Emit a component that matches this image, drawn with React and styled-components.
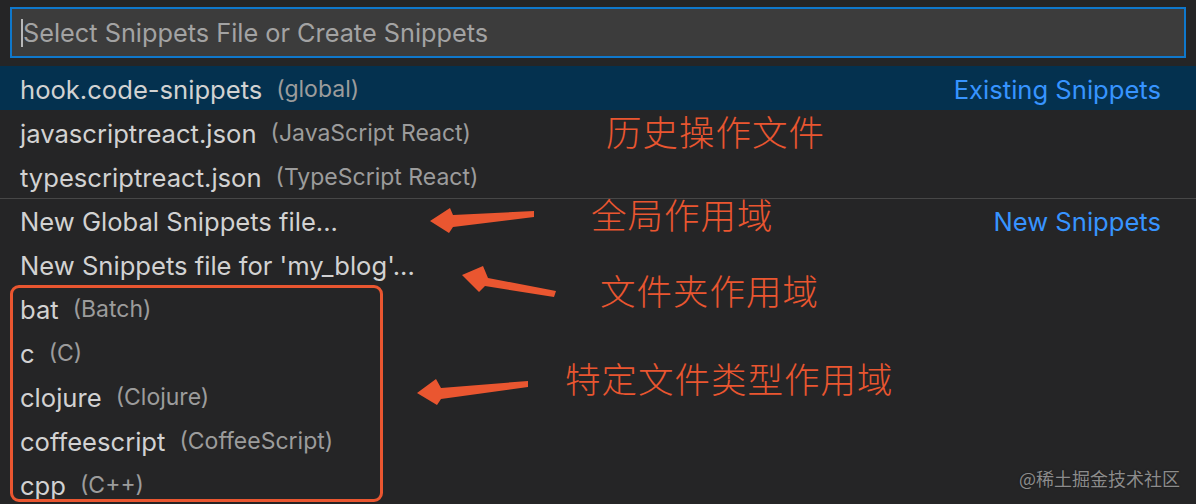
import React from 'react'
import styled, { createGlobalStyle } from 'styled-components'

const GlobalStyle = createGlobalStyle`
  body {
    margin: 0;
    background: #252526;
  }
`;

const Page = styled.div`
  position: relative;
  width: 1196px;
  height: 504px;
  overflow: hidden;
  background: #252526;
  font-family: Inter, "Noto Sans", sans-serif;
`;

const InputWrap = styled.div`
  padding: 7px 10px 8px 10px;
`;

const InputBox = styled.div`
  height: 51px;
  box-sizing: border-box;
  border: 2px solid #0f78cc;
  background: #3c3c3c;
  display: flex;
  align-items: center;
  padding-left: 9px;
`;

const Caret = styled.span`
  width: 2px;
  height: 28px;
  background: #b8b8b8;
`;

const Placeholder = styled.span`
  color: #a3a3a3;
  font-size: 25.3px;
`;

const List = styled.div`
  display: flex;
  flex-direction: column;
`;

const Row = styled.div`
  height: 44px;
  box-sizing: border-box;
  display: flex;
  align-items: center;
  padding: 2px 35px 0 20px;
  background: ${p => (p.$active ? '#04314f' : 'transparent')};
  border-top: ${p => (p.$separator ? '1px solid #474747' : 'none')};
`;

const Label = styled.span`
  color: #d2d2d2;
  font-size: 25.6px;
`;

const Desc = styled.span`
  color: #9c9c9c;
  font-size: 23px;
  margin-left: 14px;
`;

const Group = styled.span`
  margin-left: auto;
  color: #3794ff;
  font-size: 25.6px;
`;

const Note = styled.div`
  position: absolute;
  left: ${p => p.$x}px;
  top: ${p => p.$y}px;
  color: #ea5630;
  font-family: "Noto Sans CJK SC", sans-serif;
  font-weight: 300;
  font-size: 35.5px;
  line-height: 1;
  letter-spacing: 1px;
`;

const Frame = styled.div`
  position: absolute;
  left: 10px;
  top: 285px;
  width: 373px;
  height: 217px;
  box-sizing: border-box;
  border: 3px solid #ea5630;
  border-radius: 9px;
`;

const Arrows = styled.svg`
  position: absolute;
  left: 0;
  top: 0;
  pointer-events: none;
`;

const Watermark = styled.div`
  position: absolute;
  right: 16px;
  bottom: 17px;
  color: #8c8c8c;
  font-family: "Noto Sans CJK SC", sans-serif;
  font-size: 18px;
  line-height: 1;
  text-shadow: 0 0 2px rgba(0, 0, 0, 0.4);
`;

const items = [
  { label: 'hook.code-snippets', desc: '(global)', group: 'Existing Snippets', active: true },
  { label: 'javascriptreact.json', desc: '(JavaScript React)' },
  { label: 'typescriptreact.json', desc: '(TypeScript React)' },
  { label: 'New Global Snippets file...', group: 'New Snippets', separator: true },
  { label: "New Snippets file for 'my_blog'..." },
  { label: 'bat', desc: '(Batch)' },
  { label: 'c', desc: '(C)' },
  { label: 'clojure', desc: '(Clojure)' },
  { label: 'coffeescript', desc: '(CoffeeScript)' },
  { label: 'cpp', desc: '(C++)' },
];

const notes = [
  { text: '历史操作文件', x: 606, y: 113 },
  { text: '全局作用域', x: 591, y: 196 },
  { text: '文件夹作用域', x: 600, y: 272 },
  { text: '特定文件类型作用域', x: 565, y: 360 },
];

const arrowColor = '#ea5630';

export default function App() {
  return (
    <Page>
      <GlobalStyle />
      <InputWrap>
        <InputBox>
          <Caret />
          <Placeholder>Select Snippets File or Create Snippets</Placeholder>
        </InputBox>
      </InputWrap>
      <List>
        {items.map((item, i) => (
          <Row key={i} $active={item.active} $separator={item.separator}>
            <Label>{item.label}</Label>
            {item.desc && <Desc>{item.desc}</Desc>}
            {item.group && <Group>{item.group}</Group>}
          </Row>
        ))}
      </List>

      <Frame />
      {notes.map(n => (
        <Note key={n.text} $x={n.x} $y={n.y}>{n.text}</Note>
      ))}
      <Arrows width="1196" height="504" viewBox="0 0 1196 504">
        <polygon
          fill={arrowColor}
          points="534,211 534,217 453,227 449,233 430,221 450,208 453,215"
        />
        <polygon
          fill={arrowColor}
          points="556,291 554,297 485,286 479,292 462,275 483,266 488,278"
        />
        <polygon
          fill={arrowColor}
          points="528,381 528,387 441,399 437,405 417,393 436,379 441,388"
        />
      </Arrows>
      <Watermark>@稀土掘金技术社区</Watermark>
    </Page>
  )
}
